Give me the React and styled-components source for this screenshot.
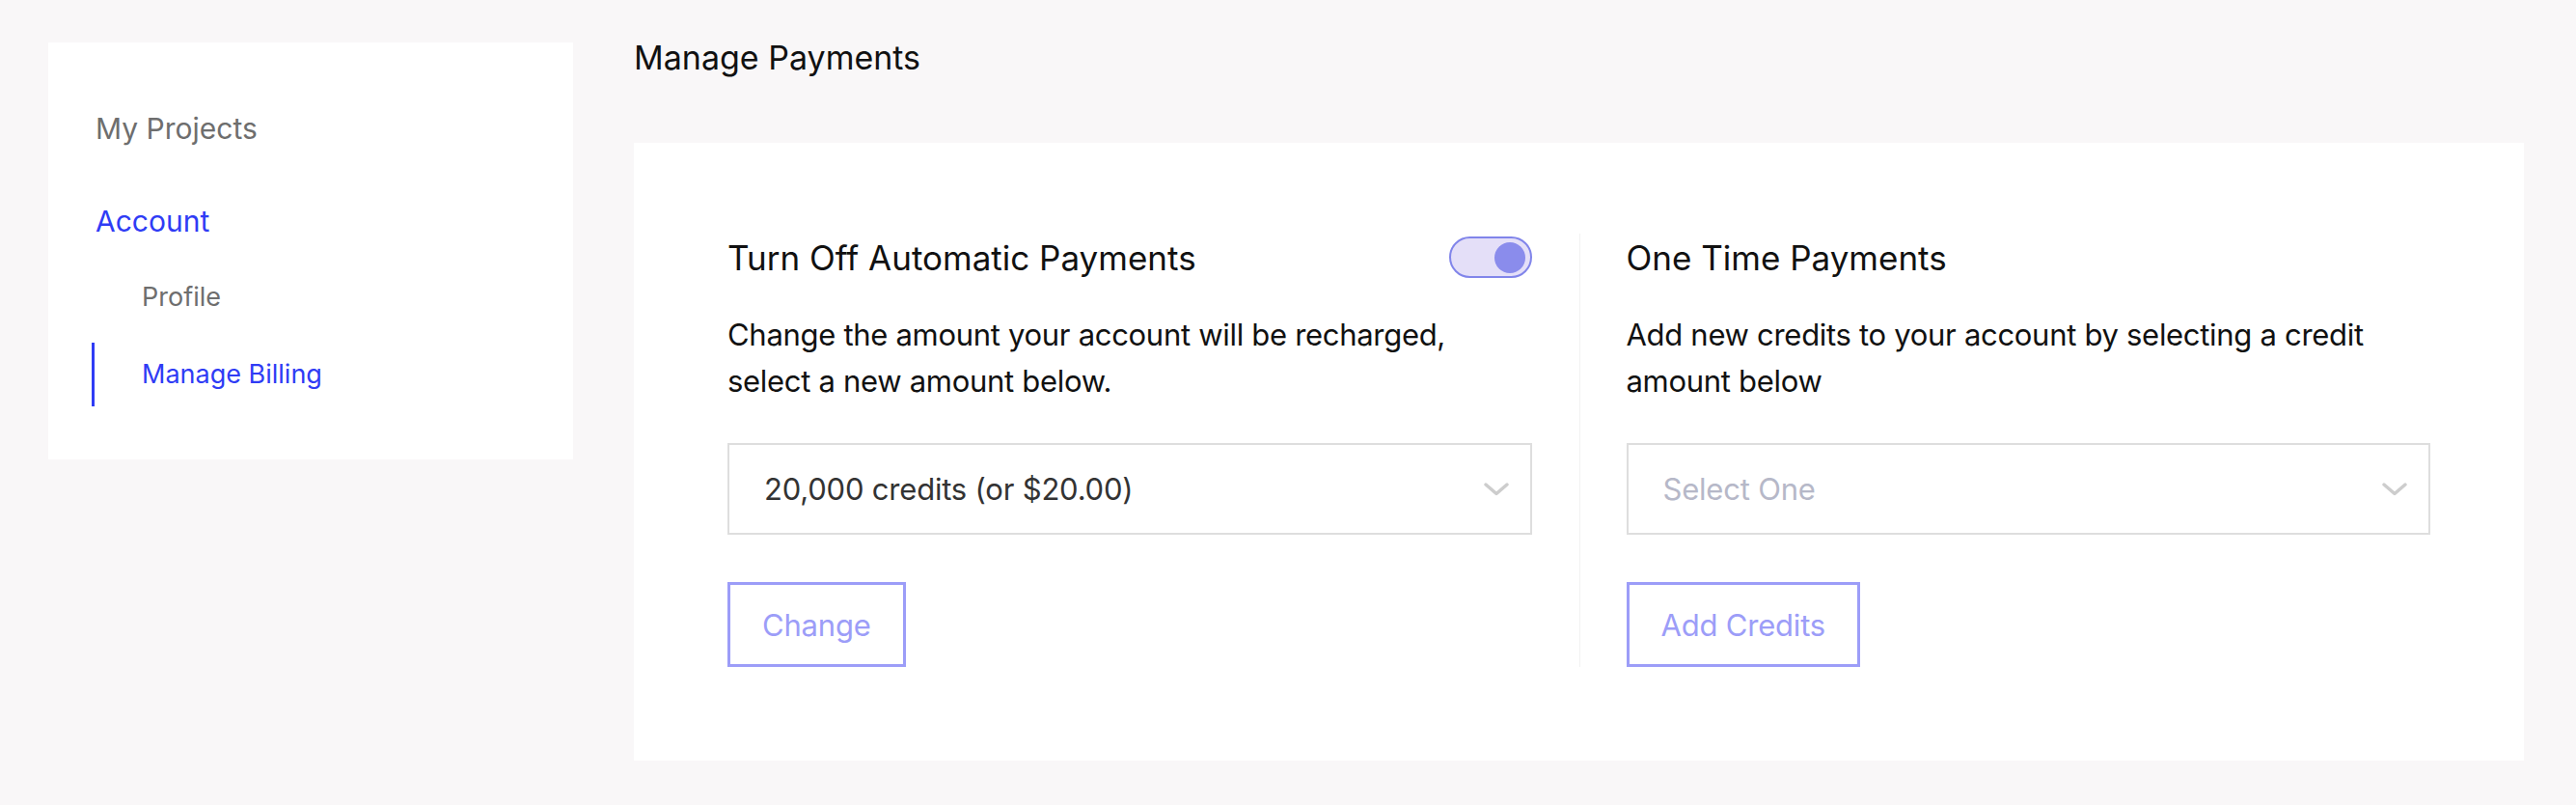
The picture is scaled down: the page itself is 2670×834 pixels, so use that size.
import React, {useState} from 'react'
import styled, {createGlobalStyle} from 'styled-components';

const GlobalStyle = createGlobalStyle`
    body{
        margin:0;
        background:#f9f7f8;
        font-family:Inter, "Noto Sans", sans-serif;
        color:#111;
    }
`;

const Chevron = () => (
    <svg width="26" height="14" viewBox="0 0 26 14" fill="none">
        <path d="M2 2 L13 11.5 L24 2" stroke="#cdcdcd" strokeWidth="3.4" strokeLinecap="round" strokeLinejoin="round"/>
    </svg>
)

const PaymentColumn = ({title, text, value, placeholder, button, toggle}) => {
    const [on, setOn] = useState(true);

    return (
        <Column>
            <ColumnHeader>
                <ColumnTitle>{title}</ColumnTitle>
                {
                    toggle ? <Toggle $on={on} onClick={() => setOn(!on)}><Knob/></Toggle> : null
                }
            </ColumnHeader>
            <Text>{text}</Text>
            <SelectBox>
                <SelectValue $empty={!value}>{value || placeholder}</SelectValue>
                <Chevron/>
            </SelectBox>
            <OutlineButton>{button}</OutlineButton>
        </Column>
    )
}

export default function App() {
    return (
        <>
            <GlobalStyle/>
            <Page>
                <Sidebar>
                    <NavTop>My Projects</NavTop>
                    <NavTop $active>Account</NavTop>
                    <SubNav>
                        <SubItem>Profile</SubItem>
                        <SubItem $active>Manage Billing</SubItem>
                    </SubNav>
                </Sidebar>
                <Main>
                    <PageTitle>Manage Payments</PageTitle>
                    <Card>
                        <PaymentColumn
                            toggle
                            title="Turn Off Automatic Payments"
                            text="Change the amount your account will be recharged, select a new amount below."
                            value="20,000 credits (or $20.00)"
                            button="Change"
                        />
                        <Divider/>
                        <PaymentColumn
                            title="One Time Payments"
                            text="Add new credits to your account by selecting a credit amount below"
                            placeholder="Select One"
                            button="Add Credits"
                        />
                    </Card>
                </Main>
            </Page>
        </>
    )
}

const Page = styled.div`
    display:flex;
    align-items:flex-start;
    padding:39px 54px 40px 50px;
    gap:63px;
`;
const Sidebar = styled.nav`
    width:544px;
    box-sizing:border-box;
    margin-top:5px;
    background:white;
    padding:71px 49px 55px;
    display:flex;
    flex-direction:column;
`;
const NavTop = styled.div`
    font-size:30px;
    line-height:36px;
    color:${p => p.$active ? '#2f3cf5' : '#6e6e6e'};
    margin-bottom:${p => p.$active ? '28px' : '60px'};
    cursor:pointer;
`;
const SubNav = styled.div`
    display:flex;
    flex-direction:column;
    gap:14px;
    margin-left:-4px;
`;
const SubItem = styled.div`
    font-size:27px;
    line-height:34px;
    padding:16px 0 16px 49px;
    border-left:3px solid ${p => p.$active ? '#2f3cf5' : 'transparent'};
    color:${p => p.$active ? '#2f3cf5' : '#6e6e6e'};
    cursor:pointer;
`;
const Main = styled.main`
    flex:1;
    display:flex;
    flex-direction:column;
`;
const PageTitle = styled.h1`
    margin:0 0 68px;
    font-size:34px;
    line-height:41px;
    font-weight:400;
    color:#111;
`;
const Card = styled.section`
    background:white;
    padding:97px;
    display:flex;
`;
const Column = styled.div`
    flex:1;
    display:flex;
    flex-direction:column;
    align-items:flex-start;
`;
const Divider = styled.div`
    width:1px;
    background:#f2f2f2;
    margin:-3px 48px 0 49px;
`;
const ColumnHeader = styled.div`
    align-self:stretch;
    height:43px;
    display:flex;
    align-items:center;
    justify-content:space-between;
`;
const ColumnTitle = styled.h2`
    margin:0;
    font-size:35px;
    font-weight:400;
    color:#111;
`;
const Toggle = styled.div`
    width:86px;
    height:43px;
    box-sizing:border-box;
    border:2px solid #8185ea;
    border-radius:22px;
    background:#e4dff8;
    padding:0 5px;
    display:flex;
    align-items:center;
    justify-content:${p => p.$on ? 'flex-end' : 'flex-start'};
    cursor:pointer;
`;
const Knob = styled.div`
    width:32px;
    height:32px;
    border-radius:50%;
    background:#8a8cec;
`;
const Text = styled.p`
    margin:35px 0 40px;
    font-size:31px;
    letter-spacing:-0.3px;
    line-height:48px;
    color:#111;
`;
const SelectBox = styled.div`
    align-self:stretch;
    height:95px;
    box-sizing:border-box;
    border:2px solid #dedede;
    padding:0 22px 0 36px;
    display:flex;
    align-items:center;
    justify-content:space-between;
    cursor:pointer;
`;
const SelectValue = styled.span`
    font-size:31px;
    letter-spacing:-0.2px;
    color:${p => p.$empty ? '#b6b8c8' : '#333'};
`;
const OutlineButton = styled.button`
    margin-top:49px;
    height:88px;
    box-sizing:border-box;
    padding:0 33px;
    background:white;
    border:3px solid #9c9df8;
    color:#9c9df8;
    font-family:inherit;
    font-size:31px;
    letter-spacing:-0.2px;
    cursor:pointer;
`;
